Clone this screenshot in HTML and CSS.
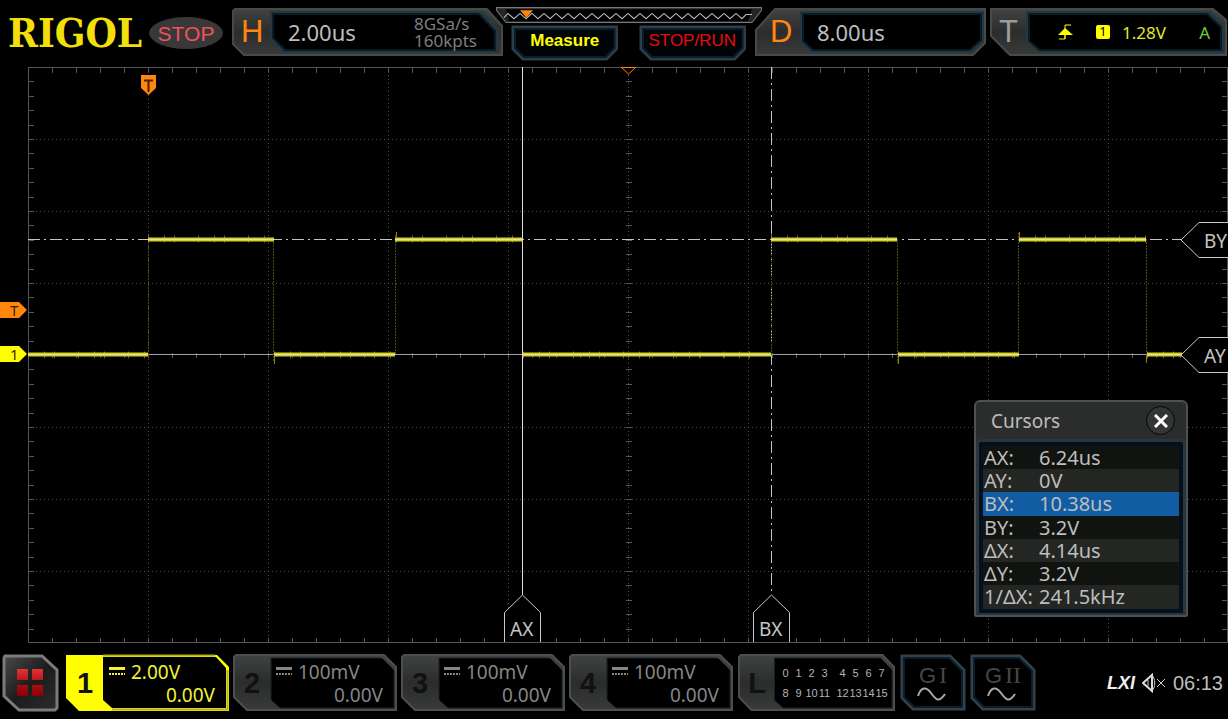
FILE: index.html
```html
<!DOCTYPE html>
<html lang="en">
<head>
<meta charset="utf-8">
<title>RIGOL Oscilloscope</title>
<link rel="stylesheet" href="styles.css">
</head>
<body>
<svg class="defs" width="0" height="0" aria-hidden="true">
  <defs>
    <linearGradient id="metal" x1="0" y1="0" x2="0" y2="1">
      <stop offset="0" stop-color="#414242"/><stop offset=".5" stop-color="#2b2c2c"/><stop offset="1" stop-color="#383939"/>
    </linearGradient>
    <linearGradient id="menu" x1="0" y1="0" x2="1" y2="1">
      <stop offset="0" stop-color="#4a4a4a"/><stop offset=".5" stop-color="#1c1c1c"/><stop offset="1" stop-color="#2c2c2c"/>
    </linearGradient>
    <linearGradient id="red" x1="0" y1="0" x2="0" y2="1">
      <stop offset="0" stop-color="#e23338"/><stop offset=".5" stop-color="#b01116"/><stop offset="1" stop-color="#850004"/>
    </linearGradient>
    <symbol id="channel" viewBox="0 0 164 57" preserveAspectRatio="none">
      <path d="M1 3 3 1H151L163 13V56H14L1 43Z" fill="url(#metal)" stroke="#4d4e4e" stroke-width="2"/>
      <path d="M38 4H150L161 15V54H47L38 46Z" fill="#000" stroke="#1c252c"/>
      <path d="M150 3 162 15V17L148 3Z" fill="#3d444b"/>
    </symbol>
    <symbol id="generator" viewBox="0 0 66 57" preserveAspectRatio="none">
      <path d="M2 2H50L64 16V55H13L2 44Z" fill="#000" stroke="#344047" stroke-width="3"/>
      <path d="M4 4H49L62 17V53H14L4 43Z" fill="none" stroke="#091d2d" stroke-width="2"/>
      <path d="M18 42C21 33 26 32 31 39S39 49 45 40" fill="none" stroke="#a9a9a9" stroke-width="2"/>
    </symbol>
    <symbol id="key" viewBox="0 0 108 36" preserveAspectRatio="none">
      <path d="M2 2H106V24L96 34H12L2 24Z" fill="#010407" stroke="#2c3e47" stroke-width="3"/>
      <path d="M4 4H104V23L95 32H13L4 23Z" fill="none" stroke="#081c2a" stroke-width="2"/>
    </symbol>
    <symbol id="dc" viewBox="0 0 16 10">
      <path d="M0 1.500H16" stroke="currentColor" stroke-width="3"/>
      <path d="M0 7H16" stroke="currentColor" stroke-width="2" stroke-dasharray="2 1"/>
    </symbol>
  </defs>
</svg>

<header class="topbar">
  <div class="logo">RIGOL</div>
  <div class="run-state">STOP</div>

  <button class="panel horizontal" type="button" aria-label="Horizontal">
    <svg class="frame" viewBox="0 0 271 48" preserveAspectRatio="none" aria-hidden="true">
      <path d="M1 3 3 1H255L270 18V47H12L1 36Z" fill="url(#metal)" stroke="#484949" stroke-width="2"/>
      <path d="M38 3H251L267 21V45H50L38 33Z" fill="#27373f"/>
      <path d="M41 6H247L263 23V42H53L41 30Z" fill="#000" stroke="#081b28" stroke-width="2"/>
    </svg>
    <span class="letter orange">H</span>
    <span class="scale">2.00us</span>
    <span class="sampling"><span>8GSa/s</span><span>160kpts</span></span>
  </button>

  <div class="center">
    <svg class="memory" viewBox="0 0 266 16" preserveAspectRatio="none" aria-hidden="true">
      <path d="M.5 1.500H265.500V4L256 15.500H10L.5 4Z" fill="#24252b" stroke="#777"/>
      <path d="M10 3H256L252 14H13Z" fill="#000"/>
      <path d="M8 11 12 7 18 12 24 7 30 12 36 7 42 12 48 7 54 12 60 7 66 12 72 7 78 12 84 7 90 12 96 7 102 12 108 7 114 12 120 7 126 12 132 7 138 12 144 7 150 12 156 7 162 12 168 7 174 12 180 7 186 12 192 7 198 12 204 7 210 12 216 7 222 12 228 7 234 12 240 7 246 12 250 8H256" fill="none" stroke="#bbb"/>
      <path d="M24 4H37L30.500 11Z" fill="#ff8410"/>
    </svg>
    <div class="keys">
      <button class="key measure" type="button"><svg class="frame" aria-hidden="true"><use href="#key" width="100%" height="100%"/></svg><span>Measure</span></button>
      <button class="key runstop" type="button"><svg class="frame" aria-hidden="true"><use href="#key" width="100%" height="100%"/></svg><span>STOP/RUN</span></button>
    </div>
  </div>

  <button class="panel delay" type="button" aria-label="Delay">
    <svg class="frame" viewBox="0 0 231 48" preserveAspectRatio="none" aria-hidden="true">
      <path d="M20 1H230V35L218 47H1V22Z" fill="url(#metal)" stroke="#484949" stroke-width="2"/>
      <path d="M45 3H229V34L217 45H55L45 35Z" fill="#27373f"/>
      <path d="M48 6H226V32L215 42H58L48 33Z" fill="#000" stroke="#081b28" stroke-width="2"/>
    </svg>
    <span class="letter orange">D</span>
    <span class="scale">8.00us</span>
  </button>

  <button class="panel trigger" type="button" aria-label="Trigger">
    <svg class="frame" viewBox="0 0 237 48" preserveAspectRatio="none" aria-hidden="true">
      <path d="M1 1H223L236 12V47H20L1 28Z" fill="url(#metal)" stroke="#484949" stroke-width="2"/>
      <path d="M36 3H220L234 16V45H49L36 34Z" fill="#27373f"/>
      <path d="M39 6H217L231 19V42H50L39 33Z" fill="#000" stroke="#081b28" stroke-width="2"/>
    </svg>
    <span class="letter">T</span>
    <svg class="edge" width="15" height="16" viewBox="0 0 15 16" aria-hidden="true"><path d="M1 15H7V1H13M7 10V15" fill="none" stroke="#ff0"/><path d="M0 11 7 4 15 11Z" fill="#ff0"/></svg>
    <span class="source">1</span>
    <span class="level">1.28V</span>
    <span class="sweep">A</span>
  </button>
</header>

<main class="scope">
  <svg class="plot" viewBox="0 66 1228 580" role="img" aria-label="Channel 1 waveform">
    <g fill="none" stroke="#505050" stroke-dasharray="1 3" shape-rendering="crispEdges">
      <path d="M148.500 67V643M268.500 67V643M388.500 67V643M508.500 67V643M628.500 67V643M748.500 67V643M868.500 67V643M988.500 67V643M1108.500 67V643"/>
      <path d="M28 139.500H1228M28 211.500H1228M28 283.500H1228M28 427.500H1228M28 499.500H1228M28 571.500H1228"/>
    </g>
    <g fill="none" stroke="#565656" shape-rendering="crispEdges">
      <path d="M1228 67.500H28.500V642.500H1228M1227.500 67V643"/>
      <path d="M28 70.500H1228M28 640H1228M28 355H1228" stroke-width="5" stroke-dasharray="1 23"/>
      <path d="M31 67V643M628.500 67V643M1225 67V643" stroke-width="6" stroke-dasharray="1 13.400"/>
    </g>
    <path d="M28 354.500H1181" stroke="#a2a2a2"/>
    <g fill="none" stroke="#c4c4c4">
      <path d="M28 239.500H1181" stroke-dasharray="12 4 2 4"/>
      <path d="M771.500 67V595" stroke-dasharray="12 4 2 4"/>
      <path d="M522.500 67V595" stroke="#ddd"/>
    </g>
    <g fill="none">
      <path d="M148.500 239V355M273.500 239V362M395.500 235V355M771.500 233V355M897.500 239V363M1018.500 233V355M1146.500 239V362" stroke="#4e4d10" stroke-dasharray="2 1"/>
      <path d="M148.500 234V239M396.500 232V239M771.500 233V239M1019.500 232V239M274.500 355V364M898.500 355V364M1146.500 355V363" stroke="#85851c"/>
      <path d="M28 355H148M274 355H395M523 355H771M898 355H1019M1147 355H1181M148 239H273M396 239H522M771 239H897M1019 239H1146" stroke="#65631a" stroke-width="7" stroke-dasharray="1 15 1 9 1 23"/>
      <path d="M28 354.500H148M274 354.500H395M523 354.500H771M898 354.500H1019M1147 354.500H1182M148 239.500H274M395 239.500H522M771 239.500H897M1019 239.500H1146" stroke="#d2cf2b" stroke-width="4"/>
      <path d="M28 354.500H148M274 354.500H395M523 354.500H771M898 354.500H1019M1147 354.500H1182M148 239.500H274M395 239.500H522M771 239.500H897M1019 239.500H1146" stroke="#e6e298"/>
    </g>
    <path d="M141 75H156V88L148.500 95 141 88Z" fill="#ff870f"/>
    <path d="M144 80.500H153M148.500 80V92" stroke="#4a2200" stroke-width="2"/>
    <path d="M621.500 67.500H635.500L628.500 74Z" fill="#000" stroke="#ff870f"/>
    <path d="M0 302H19L27 310 19 318H0Z" fill="#ff870f"/>
    <path d="M0 346H19L27 354 19 362H0Z" fill="#ff0"/>
    <g class="mark"><text x="10" y="316">T</text><text x="10" y="360">1</text></g>
    <g fill="#000" stroke="#c8c8c8">
      <path d="M504.500 642V612.500L522.500 595 540.500 612.500V642"/>
      <path d="M753.500 642V612.500L771.500 595 789.500 612.500V642"/>
      <path d="M1229 222.500H1199L1181 240 1199 257.500H1229"/>
      <path d="M1229 337.500H1199L1181 355 1199 372.500H1229"/>
    </g>
    <g class="tag"><text x="510" y="636">AX</text><text x="759" y="636">BX</text><text x="1204" y="248">BY</text><text x="1204" y="363">AY</text></g>
  </svg>

  <section class="cursors" aria-labelledby="cursors-title">
    <div class="cursors-head">
      <h2 id="cursors-title">Cursors</h2>
      <button class="close" type="button" aria-label="Close"><svg width="14" height="14" viewBox="0 0 14 14" aria-hidden="true"><path d="M1 1 13 13M13 1 1 13" stroke="#fff" stroke-width="3"/></svg></button>
    </div>
    <div class="cursors-body">
      <table>
        <tbody>
          <tr><th scope="row">AX:</th><td>6.24us</td></tr>
          <tr><th scope="row">AY:</th><td>0V</td></tr>
          <tr class="selected"><th scope="row">BX:</th><td>10.38us</td></tr>
          <tr><th scope="row">BY:</th><td>3.2V</td></tr>
          <tr><th scope="row">ΔX:</th><td>4.14us</td></tr>
          <tr><th scope="row">ΔY:</th><td>3.2V</td></tr>
          <tr><th scope="row">1/ΔX:</th><td>241.5kHz</td></tr>
        </tbody>
      </table>
    </div>
  </section>
</main>

<footer class="bottombar">
  <button class="menu" type="button" aria-label="Menu">
    <svg width="57" height="58" viewBox="0 0 57 58" aria-hidden="true">
      <path d="M3 2H40L55 16V54L53 56H17L2 42V4Z" fill="url(#menu)" stroke="#7b7b7b" stroke-width="3"/>
      <path d="M15 15H26V26H15ZM30 15H41V26H30ZM15 31H26V42H15ZM30 31H41V42H30Z" fill="url(#red)"/>
    </svg>
  </button>
  <button class="channel active" type="button">
    <svg class="frame" viewBox="0 0 163 57" preserveAspectRatio="none" aria-hidden="true">
      <path d="M0 1H151L163 13V57H13L0 44Z" fill="#ff0"/>
      <path d="M37 3H150L160 14V54H46L37 46Z" fill="#000"/>
      <path d="M37 1.500H149M161.500 16V55.500H46" stroke="#b4b41c" stroke-width="2" fill="none"/>
    </svg>
    <span class="number">1</span>
    <span class="values"><span class="range"><svg class="dc" aria-hidden="true"><use href="#dc"/></svg>2.00V</span><span>0.00V</span></span>
  </button>
  <button class="channel" type="button">
    <svg class="frame" aria-hidden="true"><use href="#channel" width="100%" height="100%"/></svg>
    <span class="number">2</span>
    <span class="values"><span class="range"><svg class="dc" aria-hidden="true"><use href="#dc"/></svg>100mV</span><span>0.00V</span></span>
  </button>
  <button class="channel" type="button">
    <svg class="frame" aria-hidden="true"><use href="#channel" width="100%" height="100%"/></svg>
    <span class="number">3</span>
    <span class="values"><span class="range"><svg class="dc" aria-hidden="true"><use href="#dc"/></svg>100mV</span><span>0.00V</span></span>
  </button>
  <button class="channel" type="button">
    <svg class="frame" aria-hidden="true"><use href="#channel" width="100%" height="100%"/></svg>
    <span class="number">4</span>
    <span class="values"><span class="range"><svg class="dc" aria-hidden="true"><use href="#dc"/></svg>100mV</span><span>0.00V</span></span>
  </button>
  <button class="channel logic" type="button">
    <svg class="frame" aria-hidden="true"><use href="#channel" width="100%" height="100%"/></svg>
    <span class="number">L</span>
    <span class="bits">
      <span class="nibble"><i>0</i><i>1</i><i>2</i><i>3</i><i>8</i><i>9</i><i>10</i><i>11</i></span>
      <span class="nibble"><i>4</i><i>5</i><i>6</i><i>7</i><i>12</i><i>13</i><i>14</i><i>15</i></span>
    </span>
  </button>
  <button class="generator first" type="button"><svg class="frame" aria-hidden="true"><use href="#generator" width="100%" height="100%"/></svg><span>G<b>I</b></span></button>
  <button class="generator" type="button"><svg class="frame" aria-hidden="true"><use href="#generator" width="100%" height="100%"/></svg><span>G<b>II</b></span></button>
  <div class="status">
    <span class="lxi">LXI</span>
    <svg width="24" height="20" viewBox="0 0 24 20" aria-hidden="true">
      <path d="M1 10 10 2V18Z" fill="none" stroke="#ddd" stroke-width="2"/>
      <path d="M9 1C14 5 14 15 9 19M6 7V13M15 6 23 14M23 6 15 14" fill="none" stroke="#ccc"/>
    </svg>
    <time>06:13</time>
  </div>
</footer>
</body>
</html>
```

FILE: styles.css
```css
* {
  box-sizing: border-box;
}

body {
  margin: 0;
  min-height: 100vh;
  display: flex;
  flex-direction: column;
  background: #000;
  color: #bdbdbd;
  font-family: "Noto Sans", "Open Sans", sans-serif;
  font-size: 19px;
  overflow-x: hidden;
}

button {
  margin: 0;
  padding: 0;
  border: 0;
  background: none;
  color: inherit;
  font: inherit;
  text-align: left;
  cursor: pointer;
}

.defs {
  position: absolute;
}

.frame {
  position: absolute;
  inset: 0;
  width: 100%;
  height: 100%;
}

.frame ~ * {
  position: relative;
}

/* Top bar */

.topbar {
  display: flex;
  align-items: flex-start;
  height: 66px;
  padding: 8px 1px 0 8px;
}

.logo {
  flex: none;
  width: 134px;
  height: 50px;
  color: #f3e00a;
  font: bold 40px/50px "DejaVu Serif Condensed", "Liberation Serif", serif;
  white-space: nowrap;
}

.run-state {
  flex: none;
  width: 74px;
  height: 32px;
  margin: 9px 9px 0 7px;
  border-radius: 50%;
  background: #383838;
  color: #f0525c;
  font: 21px/34px "Liberation Sans", Arial, sans-serif;
  text-align: center;
}

.panel {
  position: relative;
  display: flex;
  align-items: center;
  height: 48px;
}

.horizontal {
  flex: 271 1 0;
}

.delay {
  flex: 231 1 0;
  margin-right: 4px;
}

.trigger {
  flex: 237 1 0;
}

.letter {
  width: 46px;
  padding-left: 9px;
  color: #9c9c9c;
  font: 31px/48px "Liberation Sans", Arial, sans-serif;
}

.orange {
  color: #ff8410;
}

.delay .letter {
  width: 52px;
  padding-left: 15px;
}

.scale {
  padding-left: 10px;
  font-size: 22px;
}

.sampling {
  display: flex;
  flex-direction: column;
  margin-left: auto;
  padding-right: 26px;
  color: #7e7e7e;
  font-size: 17px;
  line-height: 17px;
}

.edge {
  margin-left: 22px;
}

.source {
  width: 14px;
  height: 14px;
  margin-left: 23px;
  border-radius: 2px;
  background: #ff0;
  color: #000;
  font-size: 12px;
  line-height: 14px;
  text-align: center;
}

.level {
  margin-left: 12px;
  color: #e5e52d;
  font-size: 17px;
}

.sweep {
  margin-left: auto;
  padding-right: 17px;
  color: #6dd12c;
  font-size: 17px;
}

.center {
  flex: 266 1 0;
  z-index: 1;
  margin: -2px -7px 0;
}

.memory {
  display: block;
  width: 100%;
  height: 17px;
}

.keys {
  display: flex;
  gap: 20px;
  padding: 2px 16px 0 15px;
}

.key {
  position: relative;
  flex: 1;
  height: 36px;
  font: 17px/32px "Liberation Sans", Arial, sans-serif;
  text-align: center;
}

.key span {
  display: block;
  height: 36px;
}

.measure {
  color: #ff0;
  font-weight: bold;
}

.runstop {
  color: #e80b0b;
}

/* Waveform area */

.scope {
  position: relative;
  flex: 1;
}

.plot {
  display: block;
  width: 100%;
}

.tag {
  fill: #c4c4c4;
  font-size: 19px;
}

.mark {
  fill: #3b2600;
  font-size: 15px;
}

.cursors {
  position: absolute;
  right: 40px;
  bottom: 29px;
  width: 214px;
  border: 2px solid #4c5152;
  border-radius: 6px 6px 2px 2px;
  background: #2b2c2c;
}

.cursors-head {
  display: flex;
  align-items: center;
  justify-content: space-between;
  height: 37px;
  padding: 0 11px 0 15px;
}

.cursors-head h2 {
  margin: 0;
  font-size: 19px;
  font-weight: 400;
}

.close {
  display: grid;
  place-items: center;
  width: 29px;
  height: 29px;
  border: 1px solid #050505;
  border-radius: 50%;
  background: #343535;
}

.cursors-body {
  padding: 4px;
  border: 3px solid #29363d;
  border-width: 3px 3px 2px;
  border-radius: 5px 5px 0 0;
  background: #04101b;
}

.cursors table {
  width: 100%;
  border-collapse: collapse;
  font-size: 20px;
  line-height: 23px;
}

.cursors th {
  width: 56px;
  padding: 0 0 0 1px;
  font-weight: 400;
  text-align: left;
  white-space: nowrap;
}

.cursors td {
  padding: 0;
}

.cursors tr {
  background: #101310;
}

.cursors tr:nth-child(2),
.cursors tr:nth-child(5),
.cursors tr:nth-child(7) {
  background: #242624;
}

.cursors tr.selected,
.cursors tr:last-child {
  line-height: 24px;
}

.cursors tr.selected {
  background: #125ca3;
}

/* Bottom bar */

.bottombar {
  display: flex;
  align-items: center;
  gap: 4px;
  height: 73px;
  padding: 0 5px 0 2px;
}

.menu {
  flex: none;
  width: 57px;
  height: 58px;
  margin-right: 3px;
}

.channel {
  position: relative;
  flex: 164 1 0;
  display: flex;
  align-items: center;
  height: 57px;
  color: #858585;
  font-size: 19px;
  line-height: 23px;
}

.number {
  width: 38px;
  color: #111;
  font: bold 29px/50px "Liberation Sans", Arial, sans-serif;
  text-align: center;
}

.active {
  flex-grow: 163;
  color: #f2f234;
}

.values {
  flex: 1;
  display: flex;
  flex-direction: column;
  padding: 2px 14px 0 0;
  text-align: right;
}

.range {
  display: flex;
  align-items: center;
  gap: 6px;
  padding-left: 5px;
}

.dc {
  width: 16px;
  height: 10px;
}

.logic {
  flex-grow: 157;
  margin-left: 1px;
}

.bits {
  display: flex;
  gap: 5px;
  padding-left: 3px;
  color: #b5b5b5;
  font: 11px/20px "Liberation Sans", Arial, sans-serif;
}

.nibble {
  display: grid;
  grid-template-columns: repeat(4, 13px);
  text-align: center;
}

.nibble i {
  font-style: normal;
}

.generator {
  position: relative;
  flex: 66 1 0;
  height: 57px;
  color: #464646;
  font: 22px/42px "Liberation Sans", Arial, sans-serif;
  text-align: center;
}

.generator.first {
  margin-left: 1px;
}

.generator span {
  display: block;
  height: 57px;
}

.generator b {
  margin-left: 3px;
  font: 24px/42px "Liberation Serif", serif;
}

.status {
  flex: 183 1 0;
  display: flex;
  align-items: center;
  justify-content: flex-end;
  gap: 7px;
  font: 20px/24px "Liberation Sans", Arial, sans-serif;
}

.lxi {
  color: #eee;
  font-size: 18px;
  font-style: italic;
  font-weight: bold;
}
```
